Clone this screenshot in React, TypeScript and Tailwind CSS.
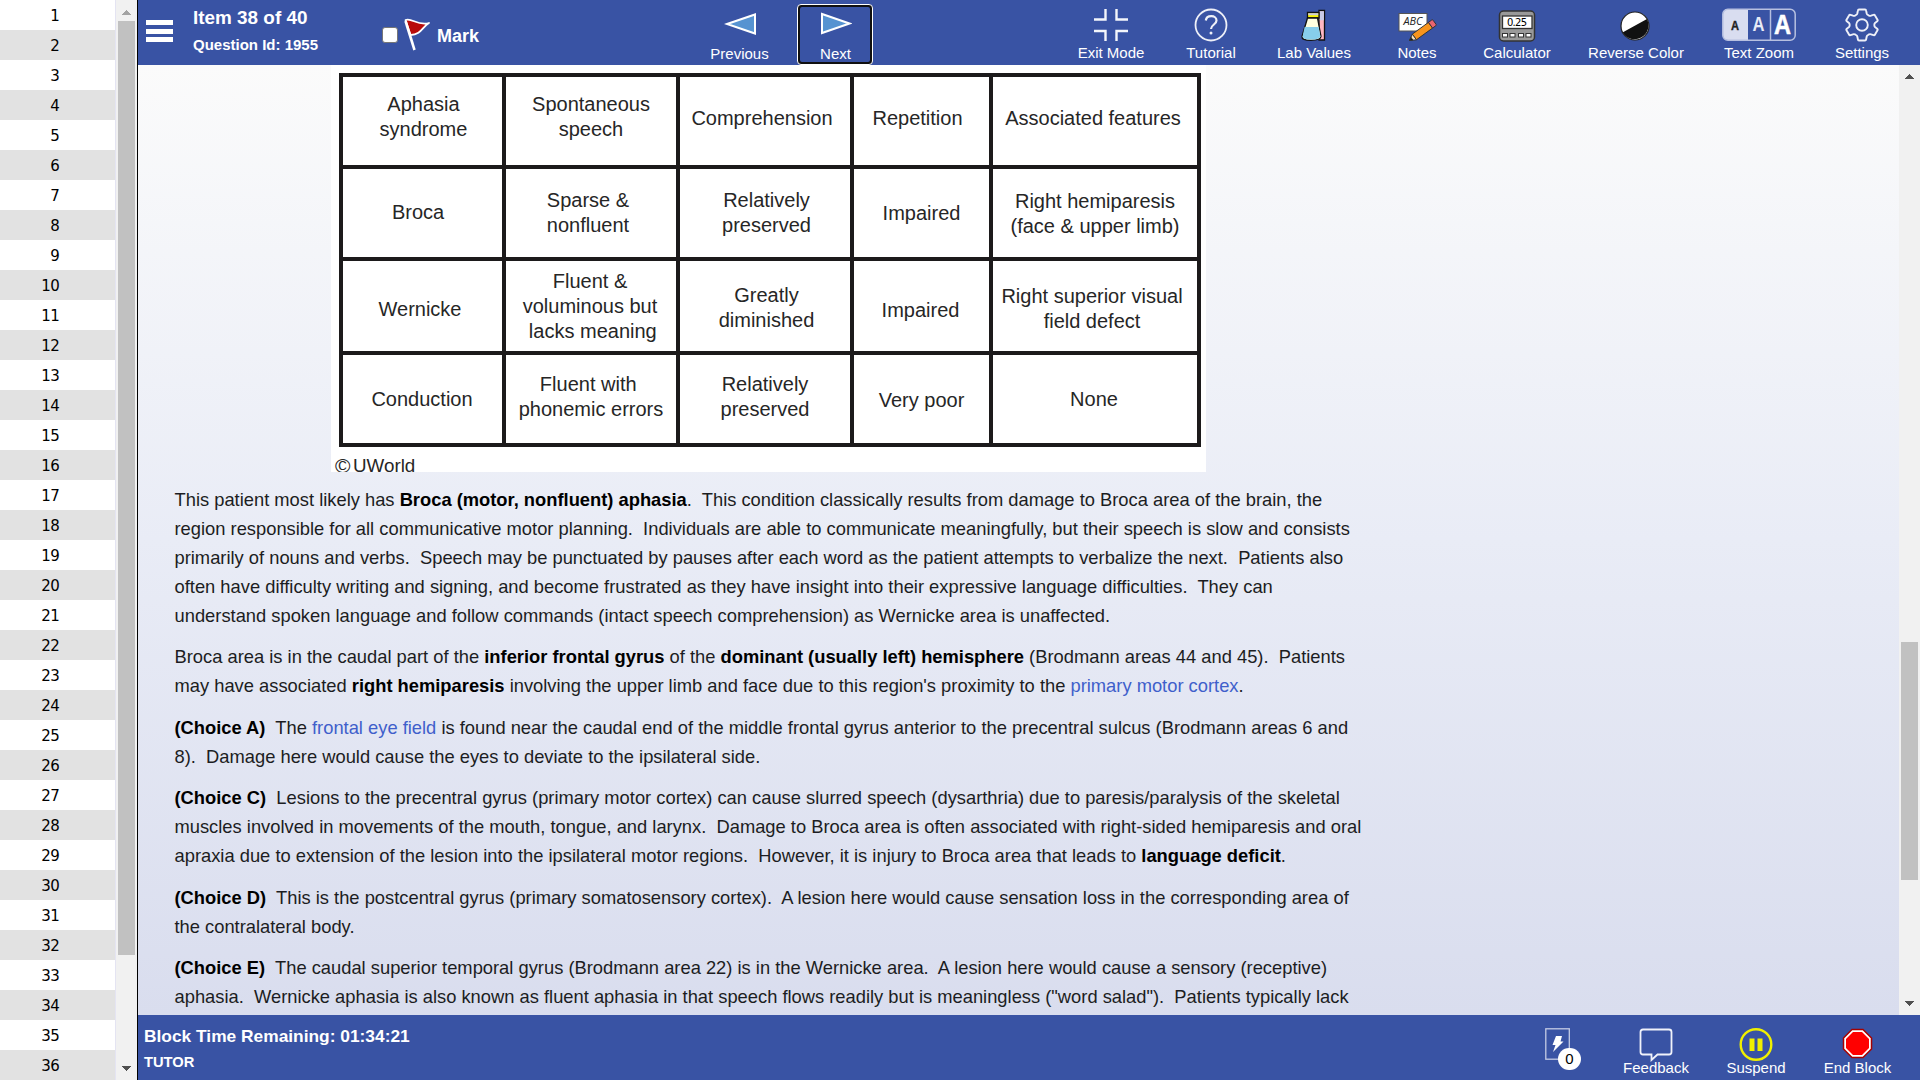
import React from "react";

function Tool({
  cls,
  label,
  box = "h-[36px] mb-px",
  children,
}: {
  cls: string;
  label: string;
  box?: string;
  children: React.ReactNode;
}) {
  return (
    <div className={"flex shrink-0 flex-col items-center " + cls}>
      <div className={"flex shrink-0 items-center justify-center " + box}>{children}</div>
      <span className="text-[15px] leading-[17px] whitespace-pre text-white">{label}</span>
    </div>
  );
}

function TopBar() {
  return (
    <header className="flex h-[65px] shrink-0 bg-[#3953a4] text-white">
      <div className="mt-5 ml-2 flex h-[22px] w-[27px] shrink-0 flex-col justify-between">
        <div className="h-[5px] bg-white" />
        <div className="h-[5px] bg-white" />
        <div className="h-[5px] bg-white" />
      </div>
      <div className="ml-[20px] w-[189px] shrink-0 font-bold">
        <div className="mt-[7px] text-[18.900px] leading-[22px] whitespace-nowrap">Item 38 of 40</div>
        <div className="mt-[6px] text-[15px] leading-[20px] whitespace-nowrap">Question Id: 1955</div>
      </div>
      <div className="mt-[27px] size-4 shrink-0 rounded-[3px] border border-[#767676] bg-white" />
      <svg className="mt-[17px] ml-[4px] shrink-0" width="30" height="34" viewBox="0 0 30 34">
        <path d="M3.500 3C10 0.500 15 9 27 6C21 9 19 18 8.500 18Z" fill="#b80b0b" stroke="#fff" strokeWidth="1.800" strokeLinejoin="round" />
        <path d="M3.500 4L12.500 33" stroke="#fff" strokeWidth="2.600" />
      </svg>
      <div className="mt-[25px] ml-[5px] w-[244px] shrink-0 text-[18px] leading-[22px] font-bold">Mark</div>
      <div className="flex w-[116px] shrink-0 flex-col items-center pt-[7px] pl-px">
        <svg width="32" height="34" viewBox="0 0 32 34">
          <path d="M3 17L31 7.500V26.500Z" fill="#5693d1" stroke="#fff" strokeWidth="2" />
        </svg>
        <span className="mt-[4px] text-[15px] leading-[17px]">Previous</span>
      </div>
      <div className="mt-[4px] flex h-[61px] w-[76px] shrink-0 flex-col items-center rounded-[4px] border border-white bg-[#101010] p-[2px]">
        <div className="flex h-full w-full flex-col items-center rounded-[2px] bg-[#3953a4] pl-px">
          <svg width="32" height="34" viewBox="0 0 32 34">
            <path d="M29.500 16.500L2 7V26Z" fill="#5693d1" stroke="#fff" strokeWidth="2" />
          </svg>
          <span className="mt-[4px] text-[15px] leading-[17px]">Next</span>
        </div>
      </div>
      <div className="mt-[7px] flex flex-1">
        <Tool cls="ml-[188px] w-[100px]" label="Exit Mode">
          <svg width="34" height="34" viewBox="0 0 34 34" fill="none" stroke="#f4f6fb" strokeWidth="2.400">
            <path d="M0 11.500H11.500V1M22.500 1V11.500H34M0 23H11.500V33M22.500 33V23H34" />
          </svg>
        </Tool>
        <Tool cls="w-[100px]" label="Tutorial">
          <svg width="34" height="34" viewBox="0 0 34 34" fill="none" stroke="#eef0f8" strokeWidth="1.800">
            <circle cx="17" cy="17" r="15.500" />
            <path d="M11.800 12.500C12.500 6.500 22.500 6.800 22.500 12.500C22.500 16.500 17.200 16.500 17 21" strokeWidth="2.200" />
            <circle cx="17" cy="25" r="1.500" fill="#eef0f8" stroke="none" />
          </svg>
        </Tool>
        <Tool cls="w-[106px]" label="Lab Values">
          <svg width="34" height="34" viewBox="0 0 34 34" stroke="#111" strokeWidth="1.300">
            <path d="M22 2.500h5.500v29.500h-5.500z" fill="#ffb6c1" />
            <path d="M22.700 3.200h4.200v9h-4.200z" fill="#c9cbe6" stroke="none" />
            <path d="M10.500 4.500H22V10H10.500Z" fill="#f7f400" />
            <path d="M11.200 5.200h10v2h-10z" fill="#ccd" stroke="none" />
            <path d="M10.500 10H20.500L24 28.500Q23.500 32.300 14 32.300Q4.500 32.300 5 28.500Z" fill="#ffffe0" />
            <path d="M7.600 19H21.600L23.400 28.500Q22.500 31.600 14 31.600Q5.500 31.600 5.600 28.500Z" fill="#87ceeb" stroke="none" />
          </svg>
        </Tool>
        <Tool cls="w-[100px]" label="Notes">
          <svg className="overflow-visible" width="38" height="36" viewBox="0 0 38 36">
            <rect x="1" y="6.500" width="28" height="17.500" fill="#fff" stroke="#555" />
            <text x="5.500" y="17.500" fontSize="10" fontStyle="italic" fontFamily="Open Sans" textLength="19" lengthAdjust="spacingAndGlyphs" fill="#222">ABC</text>
            <g transform="translate(11.500 33.500) rotate(-36)" stroke="#333" strokeWidth=".9">
              <path d="M6 -3.500H26V3.500H6Z" fill="#f7941d" />
              <path d="M0 0L6 -3.500V3.500Z" fill="#fbe3c0" />
              <path d="M0 0L3 -1.700V1.700Z" fill="#111" />
              <path d="M26 -3.500H30Q31 -3.500 31 -2.500V2.500Q31 3.500 30 3.500H26Z" fill="#ea6470" />
            </g>
          </svg>
        </Tool>
        <Tool cls="w-[100px]" label="Calculator">
          <svg width="38" height="36" viewBox="0 0 38 36">
            <rect x="1.500" y="4" width="35" height="30" rx="4" fill="#999" stroke="#333" strokeWidth="1.500" />
            <rect x="4.500" y="9" width="29.500" height="12.500" fill="#fff" stroke="#333" strokeWidth="1.300" />
            <text x="9" y="19" fontSize="10" fontFamily="DejaVu Sans" textLength="20" fill="#000">0.25</text>
            <g fill="#fff" stroke="#333">
              <rect x="4.500" y="26.500" width="5" height="3.500" />
              <rect x="12" y="26.500" width="5" height="3.500" />
              <rect x="20.500" y="26.500" width="5" height="3.500" />
              <rect x="28" y="26.500" width="5" height="3.500" />
            </g>
          </svg>
        </Tool>
        <Tool cls="w-[138px]" label="Reverse Color">
          <svg width="34" height="36" viewBox="0 0 34 36">
            <circle cx="16" cy="19" r="14" fill="#fff" />
            <path d="M3.500 25.500L28 12A14 14 0 0 1 3.500 25.500Z" fill="#111" />
            <circle cx="16" cy="19" r="14" fill="none" stroke="#222" strokeWidth="1.200" />
          </svg>
        </Tool>
        <Tool cls="w-[108px]" label="Text Zoom">
          <svg width="74" height="34" viewBox="0 0 74 34">
            <path d="M26 1H6Q1 1 1 6V27Q1 32 6 32H26Z" fill="#d9ddf0" />
            <rect x=".8" y="1.200" width="72.400" height="31" rx="5" fill="none" stroke="#b7c0e0" strokeWidth="1.500" />
            <path d="M48.500 1V32" stroke="#b7c0e0" strokeWidth="1.500" />
            <g fontFamily="Liberation Sans" fontWeight="bold" textAnchor="middle">
              <text x="13" y="21.500" fontSize="13" fill="#222" stroke="#222" strokeWidth=".4" textLength="8" lengthAdjust="spacingAndGlyphs">A</text>
              <text x="36.500" y="23" fontSize="20.500" fill="#e8ebf6" textLength="12" lengthAdjust="spacingAndGlyphs">A</text>
              <text x="60.500" y="25.500" fontSize="28.500" fill="#fff" stroke="#fff" strokeWidth=".6" textLength="17" lengthAdjust="spacingAndGlyphs">A</text>
            </g>
          </svg>
        </Tool>
        <Tool cls="w-[98px]" label="Settings">
          <svg width="34" height="34" viewBox="0 0 34 34" fill="none" stroke="#eef0f8" strokeWidth="1.900" strokeLinejoin="round">
            <path d="M14 1.500H20Q21 1.500 21.200 3L21.700 5.500Q22 6.500 23 7L24 7.600Q25 8 26 7.700L28.500 6.800Q29.500 6.500 30 7.500L32.500 11.700Q33 12.700 32.200 13.300L30 15Q29.300 15.700 29.300 17Q29.300 18.300 30 19L32.200 20.700Q33 21.300 32.500 22.300L30 26.500Q29.500 27.500 28.500 27.200L26 26.300Q25 26 24 26.400L23 27Q22 27.500 21.700 28.500L21.200 31Q21 32.500 20 32.500H14Q13 32.500 12.800 31L12.300 28.500Q12 27.500 11 27L10 26.400Q9 26 8 26.300L5.500 27.200Q4.500 27.500 4 26.500L1.500 22.300Q1 21.300 1.800 20.700L4 19Q4.700 18.300 4.700 17Q4.700 15.700 4 15L1.800 13.300Q1 12.700 1.500 11.700L4 7.500Q4.500 6.500 5.500 6.800L8 7.700Q9 8 10 7.600L11 7Q12 6.500 12.300 5.500L12.800 3Q13 1.500 14 1.500Z" />
            <circle cx="17" cy="17" r="5.800" />
          </svg>
        </Tool>
      </div>
    </header>
  );
}

function Arrow({ up, color }: { up?: boolean; color: string }) {
  return (
    <svg width="9" height="5" viewBox="0 0 9 5" shapeRendering="crispEdges">
      <path d={up ? "M0 5L4.500 0L9 5Z" : "M0 0H9L4.500 5Z"} fill={color} />
    </svg>
  );
}

function Sidebar() {
  return (
    <aside className="flex w-[138px] shrink-0 border-r border-black bg-[#e4e4f2]">
      <div className="h-full w-[115px] overflow-hidden font-['DejaVu_Sans',sans-serif]">
        {Array.from({ length: 36 }, (_, i) => (
          <div key={i} className="flex h-[30px] justify-end bg-white pr-[55.500px] text-[15px] leading-[32px] tracking-[-0.400px] text-black even:bg-[#e2e2e2]">
            {i + 1}
          </div>
        ))}
      </div>
      <div className="ml-px flex w-[21px] flex-col items-center justify-between bg-[#f1f1f1]">
        <div className="flex h-[21px] items-center pt-[3px]"><Arrow up color="#a3a3a3" /></div>
        <div className="mb-auto h-[934px] w-[17px] bg-[#c1c1c1]" />
        <div className="flex h-[21px] items-center pb-[3px]"><Arrow color="#505050" /></div>
      </div>
    </aside>
  );
}

const L = ({ children }: { children: React.ReactNode }) => <div className="whitespace-pre">{children}</div>;
const A = ({ children }: { children: React.ReactNode }) => <span className="text-[#3f5fcb]">{children}</span>;

function TableCell({ pad, lines }: { pad: string; lines: string[] }) {
  return (
    <div className={"bg-white text-center text-[20px] leading-[24.800px] whitespace-pre " + pad}>
      {lines.map((l) => <div key={l} className="-mx-4">{l}</div>)}
    </div>
  );
}

function Figure() {
  return (
    <div className="ml-[193px] h-[407px] w-[875px] shrink-0 overflow-hidden bg-white pt-[8px] pl-[8px] text-[#262626]">
      <div className="grid w-[862px] grid-cols-[159px_170px_170px_135px_204px] grid-rows-[88px_88px_90px_88px] gap-[4px] bg-[#1c1a1b] p-[4px]">
        <TableCell pad="pt-[15px] pl-[2px]" lines={["Aphasia", "syndrome"]} />
        <TableCell pad="pt-[15px]" lines={["Spontaneous", "speech"]} />
        <TableCell pad="pt-[29px] pr-[6px]" lines={["Comprehension"]} />
        <TableCell pad="pt-[29px] pr-[8px]" lines={["Repetition"]} />
        <TableCell pad="pt-[29px] pr-[4px]" lines={["Associated features"]} />
        <TableCell pad="pt-[31px] pr-[9px]" lines={["Broca"]} />
        <TableCell pad="pt-[19px] pr-[6px]" lines={["Sparse &", "nonfluent"]} />
        <TableCell pad="pt-[19px] pl-[3px]" lines={["Relatively", "preserved"]} />
        <TableCell pad="pt-[32px]" lines={["Impaired"]} />
        <TableCell pad="pt-[20px]" lines={["Right hemiparesis", "(face & upper limb)"]} />
        <TableCell pad="pt-[36px] pr-[5px]" lines={["Wernicke"]} />
        <TableCell pad="pt-[8px] pr-[2px]" lines={["Fluent &", "voluminous but", " lacks meaning"]} />
        <TableCell pad="pt-[22px] pl-[3px]" lines={["Greatly", "diminished"]} />
        <TableCell pad="pt-[37px] pr-[2px]" lines={["Impaired"]} />
        <TableCell pad="pt-[23px] pr-[6px]" lines={["Right superior visual", "field defect"]} />
        <TableCell pad="pt-[32px] pr-[1px]" lines={["Conduction"]} />
        <TableCell pad="pt-[17px]" lines={["Fluent with ", "phonemic errors"]} />
        <TableCell pad="pt-[17px]" lines={["Relatively", "preserved"]} />
        <TableCell pad="pt-[33px]" lines={["Very poor"]} />
        <TableCell pad="pt-[32px] pr-[2px]" lines={["None"]} />
      </div>
      <div className="-ml-[4px] flex items-center pt-[8px] text-[18.800px] leading-[22px]">
        <span className="w-[18px] text-[21px]">©</span>UWorld
      </div>
    </div>
  );
}

function Explanation() {
  return (
    <div className="flex flex-col gap-[12.600px] pt-[14px] pl-[36.500px] text-[18.340px] leading-[28.960px] text-[#1c1d22] [&_b]:text-black">
      <p>
        <L>This patient most likely has <b>Broca (motor, nonfluent) aphasia</b>.  This condition classically results from damage to Broca area of the brain, the</L>
        <L>region responsible for all communicative motor planning.  Individuals are able to communicate meaningfully, but their speech is slow and consists</L>
        <L>primarily of nouns and verbs.  Speech may be punctuated by pauses after each word as the patient attempts to verbalize the next.  Patients also</L>
        <L>often have difficulty writing and signing, and become frustrated as they have insight into their expressive language difficulties.  They can</L>
        <L>understand spoken language and follow commands (intact speech comprehension) as Wernicke area is unaffected.</L>
      </p>
      <p>
        <L>Broca area is in the caudal part of the <b>inferior frontal gyrus</b> of the <b>dominant (usually left) hemisphere</b> (Brodmann areas 44 and 45).  Patients</L>
        <L>may have associated <b>right hemiparesis</b> involving the upper limb and face due to this region's proximity to the <A>primary motor cortex</A>.</L>
      </p>
      <p>
        <L><b>(Choice A)</b>  The <A>frontal eye field</A> is found near the caudal end of the middle frontal gyrus anterior to the precentral sulcus (Brodmann areas 6 and</L>
        <L>8).  Damage here would cause the eyes to deviate to the ipsilateral side.</L>
      </p>
      <p>
        <L><b>(Choice C)</b>  Lesions to the precentral gyrus (primary motor cortex) can cause slurred speech (dysarthria) due to paresis/paralysis of the skeletal</L>
        <L>muscles involved in movements of the mouth, tongue, and larynx.  Damage to Broca area is often associated with right-sided hemiparesis and oral</L>
        <L>apraxia due to extension of the lesion into the ipsilateral motor regions.  However, it is injury to Broca area that leads to <b>language deficit</b>.</L>
      </p>
      <p>
        <L><b>(Choice D)</b>  This is the postcentral gyrus (primary somatosensory cortex).  A lesion here would cause sensation loss in the corresponding area of</L>
        <L>the contralateral body.</L>
      </p>
      <p>
        <L><b>(Choice E)</b>  The caudal superior temporal gyrus (Brodmann area 22) is in the Wernicke area.  A lesion here would cause a sensory (receptive)</L>
        <L>aphasia.  Wernicke aphasia is also known as fluent aphasia in that speech flows readily but is meaningless ("word salad").  Patients typically lack</L>
      </p>
    </div>
  );
}

function BottomBar() {
  return (
    <footer className="flex h-[65px] shrink-0 bg-[#3953a4] text-white">
      <div className="flex-1 pt-[10px] pl-[6px] font-bold">
        <div className="text-[17.350px] leading-[22px]">Block Time Remaining: 01:34:21</div>
        <div className="mt-[5px] text-[14.700px] leading-[20px]">TUTOR</div>
      </div>
      <div className="relative w-[56px]">
        <svg className="mt-[13px]" width="30" height="32" viewBox="0 0 30 32">
          <rect x=".8" y=".8" width="23.500" height="30.400" fill="none" stroke="#c4cbe5" strokeWidth="1.300" />
          <path d="M11 8H17L15.500 13.500H18.500L8 24L10.500 17H7.500Z" fill="#fff" />
        </svg>
        <div className="absolute top-[33px] left-[13px] flex h-[22px] w-[23px] items-center justify-center rounded-full bg-white text-[15px] text-black">0</div>
      </div>
      <div className="flex pt-[16px]">
        <Tool cls="w-[110px]" label="Feedback" box="h-[28px]">
          <svg width="34" height="34" viewBox="0 0 34 34" fill="none" stroke="#f0f2fa" strokeWidth="1.800">
            <path d="M4 1.500H30Q32.500 1.500 32.500 4V24Q32.500 26.500 30 26.500H18.500L12.500 32V26.500H4Q1.500 26.500 1.500 24V4Q1.500 1.500 4 1.500Z" />
          </svg>
        </Tool>
        <Tool cls="w-[90px]" label="Suspend" box="h-[28px]">
          <svg width="34" height="34" viewBox="0 0 34 34">
            <circle cx="17" cy="16.500" r="15.300" fill="none" stroke="#f0f000" strokeWidth="2.400" />
            <path d="M10.500 10.500H15.500V23H10.500ZM18.500 10.500H23.500V23H18.500Z" fill="#f0f000" />
          </svg>
        </Tool>
        <Tool cls="mr-[6px] w-[113px]" label="End Block" box="h-[28px]">
          <svg width="34" height="34" viewBox="0 0 34 34">
            <path d="M11 1.500H22L30.500 10V21L22 29.500H11L2.500 21V10Z" fill="#fff" stroke="#a50000" strokeWidth="1.500" />
            <path d="M12 4H21L28 11V20L21 27H12L5 20V11Z" fill="#f00" />
          </svg>
        </Tool>
      </div>
    </footer>
  );
}

export default function App() {
  return (
    <div className="flex h-[1080px] w-[1920px] overflow-hidden font-['Liberation_Sans',sans-serif]">
      <Sidebar />
      <div className="flex min-w-0 flex-1 flex-col">
        <TopBar />
        <div className="flex h-[950px] min-h-0">
          <main className="h-full flex-1 overflow-hidden bg-linear-to-b from-[#fbfbfb] via-[#e9ecf6] to-[#d9ddee]">
            <Figure />
            <Explanation />
          </main>
          <div className="flex w-[21px] flex-col items-center bg-[#f1f1f1]">
            <div className="flex h-[577px] pt-[9px]"><Arrow up color="#505050" /></div>
            <div className="h-[238px] w-[17px] bg-[#c1c1c1]" />
            <div className="mt-auto pb-[9px]"><Arrow color="#505050" /></div>
          </div>
        </div>
        <BottomBar />
      </div>
    </div>
  );
}
